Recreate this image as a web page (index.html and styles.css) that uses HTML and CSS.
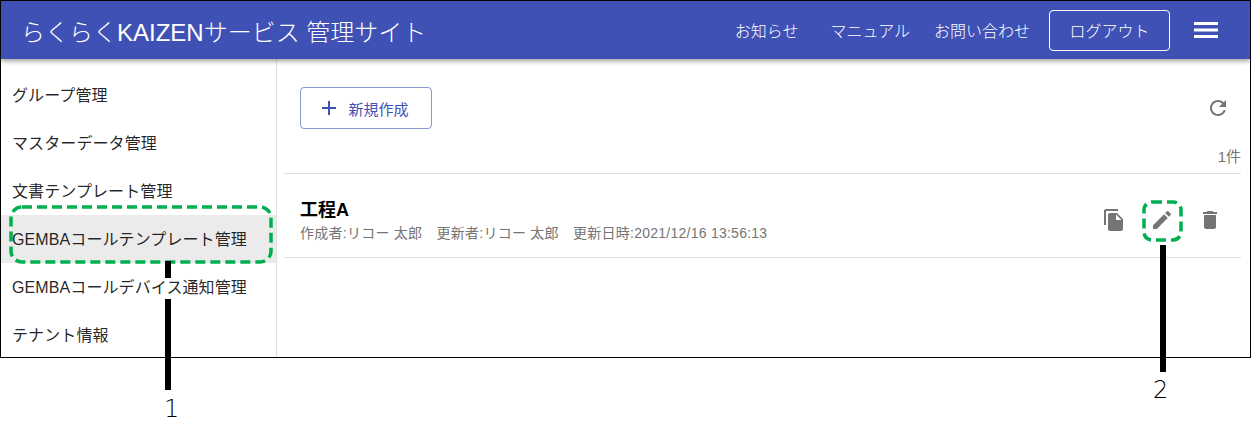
FILE: index.html
```html
<!DOCTYPE html>
<html lang="ja">
<head>
  <title>らくらくKAIZENサービス 管理サイト</title>
  <link rel="stylesheet" href="styles.css">
</head>
<body>
  <div class="frame">
    <header class="topbar">
      <span class="site-title">らくらくKAIZENサービス 管理サイト</span>
      <nav class="top-links">
        <a class="link-info">お知らせ</a>
        <a class="link-manual">マニュアル</a>
        <a class="link-contact">お問い合わせ</a>
        <button class="logout">ログアウト</button>
        <svg class="menu-icon" viewBox="0 0 24 16" width="24" height="16"><path d="M0 0h24v3H0zM0 6.500h24v3H0zM0 13h24v3H0z" fill="#fff"/></svg>
      </nav>
    </header>
    <div class="content">
      <ul class="side-menu">
        <li>グループ管理</li>
        <li>マスターデータ管理</li>
        <li>文書テンプレート管理</li>
        <li class="active">GEMBAコールテンプレート管理</li>
        <li>GEMBAコールデバイス通知管理</li>
        <li>テナント情報</li>
      </ul>
      <main class="main">
        <div class="toolbar">
          <button class="new-btn">
            <svg viewBox="0 0 24 24" width="24" height="24"><path d="M19 13h-6v6h-2v-6H5v-2h6V5h2v6h6v2z" fill="#3f51b5"/></svg>
            <span>新規作成</span>
          </button>
          <svg class="reload" viewBox="0 0 24 24" width="24" height="24"><path d="M17.650 6.350A7.958 7.958 0 0 0 12 4c-4.420 0-7.990 3.580-7.990 8s3.570 8 7.990 8c3.730 0 6.840-2.550 7.730-6h-2.080A5.990 5.990 0 0 1 12 18c-3.310 0-6-2.690-6-6s2.690-6 6-6c1.660 0 3.140.69 4.220 1.780L13 11h7V4l-2.350 2.350z" fill="#757575"/></svg>
        </div>
        <div class="count">1件</div>
        <div class="row">
          <div class="row-text">
            <div class="row-title">工程A</div>
            <div class="row-meta">作成者:リコー 太郎　更新者:リコー 太郎　更新日時:2021/12/16 13:56:13</div>
          </div>
          <div class="row-actions">
            <svg viewBox="0 0 24 24" width="24" height="24"><path d="M16 1H4c-1.100 0-2 .9-2 2v14h2V3h12V1zm-1 4l6 6v10c0 1.100-.9 2-2 2H7.990C6.890 23 6 22.100 6 21l.01-14c0-1.100.89-2 1.990-2h7zm-1 7h5.500L14 6.500V12z" fill="#757575"/></svg>
            <svg viewBox="0 0 24 24" width="24" height="24"><path d="M3 17.250V21h3.750L17.810 9.940l-3.750-3.750L3 17.250zM20.710 7.040a.996.996 0 0 0 0-1.410l-2.340-2.340a.996.996 0 0 0-1.410 0l-1.830 1.830 3.750 3.750 1.830-1.830z" fill="#757575"/></svg>
            <svg viewBox="0 0 24 24" width="24" height="24"><path d="M6 19c0 1.100.9 2 2 2h8c1.100 0 2-.9 2-2V7H6v12zM19 4h-3.500l-1-1h-5l-1 1H5v2h14V4z" fill="#757575"/></svg>
          </div>
        </div>
      </main>
    </div>
  </div>

  <!-- callouts drawn over the screenshot -->
  <svg class="mark mark-menu" width="264" height="60" viewBox="0 0 264 60"><rect x="2" y="2" width="260" height="55" rx="11" fill="none" stroke="#00b050" stroke-width="3.500" stroke-dasharray="10 5"/></svg>
  <svg class="mark mark-edit" width="42" height="44" viewBox="0 0 42 44"><rect x="2" y="2" width="37" height="38" rx="8" fill="none" stroke="#00b050" stroke-width="3.500" stroke-dasharray="10 5"/></svg>
  <div class="leader leader-1a"></div>
  <div class="leader leader-1b"></div>
  <div class="leader leader-2"></div>
  <span class="callout-num num-1">1</span>
  <span class="callout-num num-2">2</span>
</body>
</html>
```

FILE: styles.css
```css
html, body {
    margin: 0;
    padding: 0;
}
body {
    position: relative;
    width: 1252px;
    height: 440px;
    overflow: hidden;
    background-color: #fff;
    font-family: "Liberation Sans", "Noto Sans CJK JP", sans-serif;
    color: rgba(0, 0, 0, 0.87);
}

.frame {
    box-sizing: border-box;
    width: 1251px;
    height: 358px;
    border: 1px solid #000;
    overflow: hidden;
}

.topbar {
    position: relative;
    z-index: 1;
    display: flex;
    align-items: center;
    justify-content: space-between;
    height: 58px;
    padding: 0 32px 0 20px;
    background-color: #3f51b5;
    color: #fff;
    box-shadow: 0 2px 5px rgba(0, 0, 0, 0.4);
}
.site-title {
    font-size: 24px;
    font-weight: 300;
}
.top-links {
    display: flex;
    align-items: center;
    font-size: 16px;
    font-weight: 300;
}
.link-info {
    margin-right: 32px;
}
.link-manual {
    margin-right: 24px;
}
.link-contact {
    margin-right: 19px;
}
.logout {
    width: 121px;
    height: 41px;
    margin-right: 24px;
    padding: 0;
    border: 1px solid #fff;
    border-radius: 4px;
    background: none;
    color: #fff;
    font-family: inherit;
    font-size: 16px;
    font-weight: 300;
}

.content {
    display: flex;
    height: 298px;
}
.side-menu {
    box-sizing: border-box;
    flex: none;
    width: 276px;
    margin: 0;
    padding: 12px 0 0;
    list-style: none;
    border-right: 1px solid #e0e0e0;
    font-size: 16px;
    letter-spacing: 0.1px;
}
.side-menu li {
    height: 48px;
    padding-left: 11px;
    line-height: 50px;
    white-space: nowrap;
}
.side-menu .active {
    background-color: #ebebeb;
}

.main {
    flex: 1;
    padding: 0 9px 0 7px;
}
.toolbar {
    display: flex;
    align-items: center;
    justify-content: space-between;
    padding: 28px 11px 0 16px;
}
.new-btn {
    display: flex;
    align-items: center;
    justify-content: center;
    gap: 7px;
    box-sizing: border-box;
    width: 132px;
    height: 42px;
    padding: 0 6px 0 0;
    border: 1px solid rgba(63, 81, 181, 0.6);
    border-radius: 4px;
    background: none;
    color: #3f51b5;
    font-family: inherit;
    font-size: 15px;
}
.count {
    margin-top: 18px;
    text-align: right;
    font-size: 15px;
    line-height: 20px;
    color: #757575;
}
.row {
    display: flex;
    align-items: center;
    justify-content: space-between;
    box-sizing: content-box;
    height: 75px;
    margin-top: 6px;
    padding: 8px 19px 0 16px;
    border-top: 1px solid #e0e0e0;
    border-bottom: 1px solid #e0e0e0;
}
.row-text {
    padding-top: 2px;
}
.row-title {
    font-size: 18px;
    font-weight: 700;
    line-height: 24px;
    color: #000;
}
.row-meta {
    font-size: 14px;
    line-height: 22px;
    letter-spacing: 0.25px;
    color: #757575;
    white-space: nowrap;
}
.row-actions {
    display: flex;
    gap: 24px;
}

/* callouts */
.mark {
    position: absolute;
}
.mark-menu {
    left: 9px;
    top: 205px;
}
.mark-edit {
    left: 1142px;
    top: 200px;
}
.leader {
    position: absolute;
    width: 6px;
    background-color: #000;
}
.leader-1a {
    left: 165px;
    top: 261px;
    height: 17px;
}
.leader-1b {
    left: 165px;
    top: 299px;
    height: 91px;
}
.leader-2 {
    left: 1160px;
    top: 245px;
    height: 127px;
}
.callout-num {
    position: absolute;
    font-family: "DejaVu Sans", sans-serif;
    font-size: 24px;
    font-weight: 200;
    line-height: 28px;
    color: #000;
}
.num-1 {
    left: 164px;
    top: 395px;
}
.num-2 {
    left: 1153px;
    top: 376px;
}
```
